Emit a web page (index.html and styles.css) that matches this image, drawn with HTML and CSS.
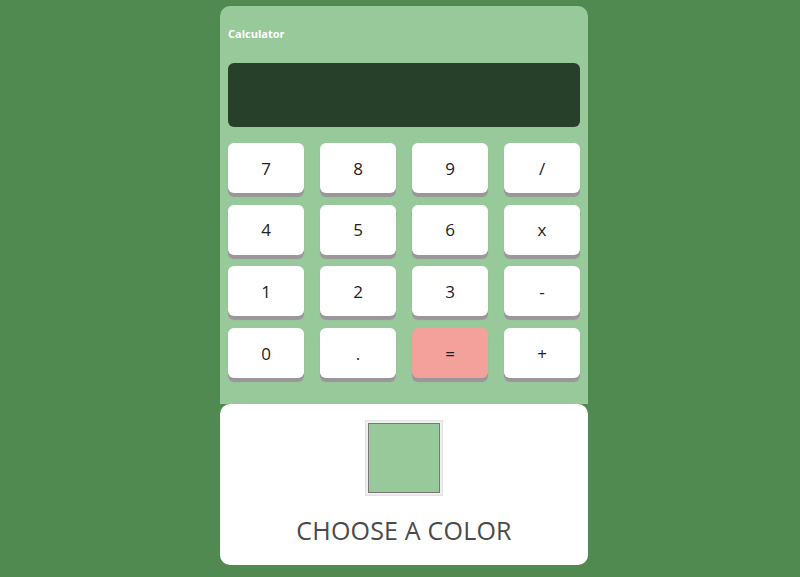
FILE: index.html
```html
<!DOCTYPE html>
<html>
<head>
<meta charset="utf-8">
<link rel="stylesheet" href="styles.css">
</head>
<body>
<div class="app">
  <div class="calc">
    <div class="title">Calculator</div>
    <div class="display"></div>
    <div class="keys">
      <button class="key">7</button>
      <button class="key">8</button>
      <button class="key">9</button>
      <button class="key">/</button>
      <button class="key">4</button>
      <button class="key">5</button>
      <button class="key">6</button>
      <button class="key">x</button>
      <button class="key">1</button>
      <button class="key">2</button>
      <button class="key">3</button>
      <button class="key">-</button>
      <button class="key">0</button>
      <button class="key">.</button>
      <button class="key eq">=</button>
      <button class="key">+</button>
    </div>
  </div>
  <div class="picker">
    <div class="swatch"><div class="swatch-inner"></div></div>
    <div class="label">CHOOSE A COLOR</div>
  </div>
</div>
</body>
</html>
```
FILE: styles.css
```css
* { box-sizing: border-box; }
html, body { margin: 0; padding: 0; }
body {
  background: #508a50;
  font-family: "Open Sans", "Noto Sans", sans-serif;
  height: 577px;
  overflow: hidden;
}
.app {
  width: 368px;
  margin: 6px 0 0 220px;
}
.calc {
  background: #98c99b;
  border-radius: 10px 10px 0 0;
  padding: 20px 8px 14px;
  height: 398px;
}
.title {
  color: #fff;
  font-weight: 700;
  font-size: 11px;
  line-height: 16px;
  height: 16px;
}
.display {
  margin-top: 21px;
  height: 64px;
  background: #27402a;
  border-radius: 6px;
}
.keys {
  margin-top: 16px;
  display: grid;
  grid-template-columns: repeat(4, 76px);
  column-gap: 16px;
  row-gap: 11.7px;
}
.key {
  height: 50px;
  border: none;
  border-radius: 6px;
  background: #fff;
  box-shadow: 0 4px 1px #9b9699;
  font-family: "Open Sans", "Noto Sans", sans-serif;
  font-size: 17px;
  font-weight: 500;
  color: #222;
  padding: 0;
}
.key.eq { background: #f4a19c; }
.picker {
  background: #fff;
  border-radius: 10px;
  height: 161px;
  display: flex;
  flex-direction: column;
  align-items: center;
  padding-top: 16px;
}
.swatch {
  width: 78px;
  height: 76px;
  background: #efefef;
  border: 1px solid #e2e2e2;
  padding: 2px;
}
.swatch-inner {
  width: 100%;
  height: 100%;
  background: #98c99b;
  border: 1px solid #777;
}
.label {
  margin-top: 17px;
  font-size: 25px;
  font-weight: 500;
  color: #4a4a4a;
  letter-spacing: 0.2px;
}
```
